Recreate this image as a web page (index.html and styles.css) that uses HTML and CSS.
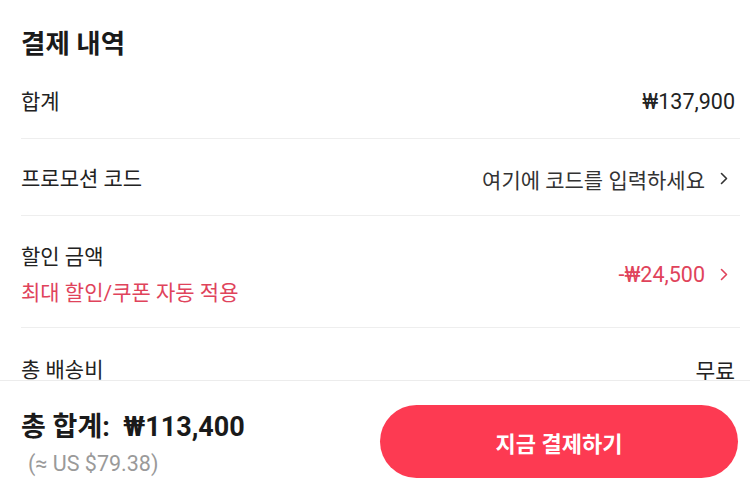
FILE: index.html
```html
<!DOCTYPE html>
<html lang="ko">
<head>
    <meta charset="UTF-8">
    <meta name="viewport" content="width=device-width, initial-scale=1.0">
    <title>결제 내역</title>
    <link rel="stylesheet" href="styles.css">
</head>
<body>
    <div class="summary">
        <h1>결제 내역</h1>

        <div class="row">
            <div class="label">합계</div>
            <div class="value">₩137,900</div>
        </div>

        <div class="row">
            <div class="label">프로모션 코드</div>
            <div class="value link">여기에 코드를 입력하세요
                <svg class="chevron" viewBox="0 0 8 13"><polyline points="1.5,1.5 6.5,6.5 1.5,11.5"/></svg>
            </div>
        </div>

        <div class="row tall">
            <div class="label">
                할인 금액
                <div class="sub">최대 할인/쿠폰 자동 적용</div>
            </div>
            <div class="value link discount">-₩24,500
                <svg class="chevron" viewBox="0 0 8 13"><polyline points="1.5,1.5 6.5,6.5 1.5,11.5"/></svg>
            </div>
        </div>

        <div class="row">
            <div class="label">총 배송비</div>
            <div class="value">무료</div>
        </div>
    </div>

    <!-- 하단 결제 바 -->
    <div class="checkout-bar">
        <div class="total">
            <div class="total-line">총 합계:&nbsp; ₩113,400</div>
            <div class="usd">(≈ US $79.38)</div>
        </div>
        <button class="pay-btn">지금 결제하기</button>
    </div>
</body>
</html>
```

FILE: styles.css
```css
* {
    box-sizing: border-box;
    font-family: Roboto, "Noto Sans CJK KR", sans-serif;
}

body {
    margin: 0;
    background: #fff;
    color: #222;
    overflow: hidden;
}

.summary {
    padding: 0 10px 0 21px;
}

h1 {
    margin: 0;
    height: 62px;
    padding-top: 27px;
    font-size: 26.5px;
    line-height: 34px;
    font-weight: 700;
    color: #1a1a1a;
}

.row {
    display: flex;
    justify-content: space-between;
    align-items: center;
    height: 77px;
    padding-right: 5px;
    padding-top: 3px;
    border-bottom: 1px solid #eeeeee;
    font-size: 21px;
}

.row:last-child {
    border-bottom: none;
    padding-top: 6px;
}

.row.tall {
    height: 112px;
    padding-top: 6px;
}

.label {
    line-height: 36px;
    color: #222;
}

.sub {
    color: #e0435b;
}

.value {
    color: #222;
    font-size: 21.5px;
}

.link {
    display: flex;
    align-items: center;
    color: #333;
    font-size: 21px;
}

.discount {
    color: #e0435b;
    font-size: 21.5px;
}

.chevron {
    width: 8px;
    height: 13px;
    margin-left: 15px;
    margin-right: 7px;
    fill: none;
    stroke: currentColor;
    stroke-width: 1.6;
    stroke-linecap: round;
    stroke-linejoin: round;
}

.checkout-bar {
    position: fixed;
    left: 0;
    right: 0;
    bottom: 0;
    height: 120px;
    background: #fff;
    border-top: 1px solid #ececec;
    display: flex;
    align-items: center;
    justify-content: space-between;
    padding: 0 12px 0 21px;
}

.total {
    margin-top: 6px;
}

.total-line {
    font-size: 27px;
    font-weight: 700;
    color: #1a1a1a;
    line-height: 36px;
}

.usd {
    margin-top: 4px;
    padding-left: 7px;
    font-size: 21.5px;
    color: #9a9a9a;
    line-height: 30px;
}

.pay-btn {
    width: 358px;
    height: 73px;
    border: none;
    border-radius: 37px;
    background: #fd3a52;
    color: #fff;
    font-size: 22px;
    font-weight: 700;
    margin-top: 2px;
    cursor: pointer;
}
```
